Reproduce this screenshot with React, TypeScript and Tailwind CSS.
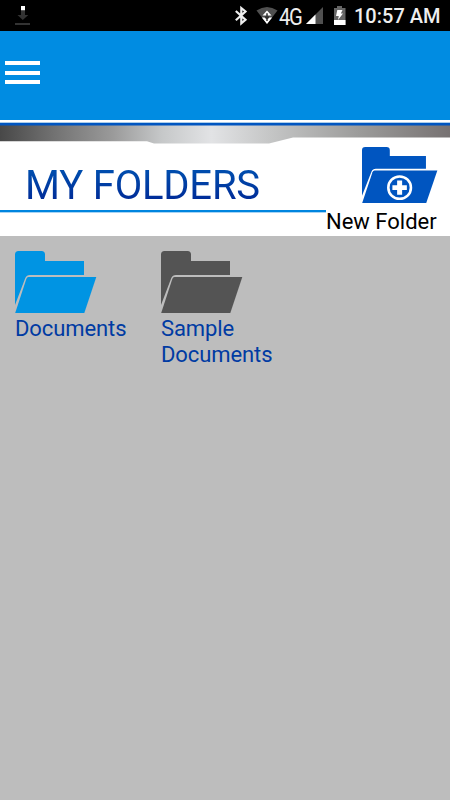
type FolderProps = { className: string; withPlus?: boolean };

function FolderIcon({ className, withPlus }: FolderProps) {
  return (
    <svg viewBox="0 0 82 62" preserveAspectRatio="none" className={className} fill="currentColor">
      <path d="M0 54V3.500Q0 0 3.500 0H26.500Q30 0 30 3.500V10H69V24H15Q11.500 24 10.300 27Z" />
      <path d="M13.500 26H81.300L69.300 62H0.200L11.300 28Q12 26 13.500 26Z" />
      {withPlus && (
        <g fill="none" stroke="white">
          <ellipse cx="40.600" cy="45" rx="12.200" ry="12.400" strokeWidth="2.800" />
          <path d="M40.600 37V53M32.800 45H48.400" strokeWidth="5.400" />
        </g>
      )}
    </svg>
  );
}

function StatusBar() {
  return (
    <div className="flex h-[31px] items-start justify-between bg-black pl-[15px] pr-[10px]">
      <svg className="mt-[5px] h-[21px] w-[15px]" viewBox="0 0 15 21">
        <path d="M6 5.500H10V10H13.300L7.800 15L2.500 10H6Z" fill="#333" />
        <path d="M6 1H10V5.300H6Z" fill="#fff" />
        <path d="M0 18H15V20H0Z" fill="#333" />
      </svg>
      <div className="flex">
        <svg className="h-[31px] w-[120px]" viewBox="232 0 120 31">
          <path d="M235.800 11L245.500 19.800L241.300 23.300V8L245.500 11.500L235.800 20.300" fill="none" stroke="#eee" strokeWidth="2.200" />
          <path d="M256.500 10.500Q267 3.500 277.500 10.500L267 24Z" fill="#505050" />
          <path d="M267 10.500L271.500 15.500H262.500ZM267 24L261.800 17.500H272.200Z" fill="#fff" />
          <path d="M267 13.200V21M265 16.500L267 19L269 16.500" fill="none" stroke="#333" strokeWidth="1.500" />
          <text transform="translate(279 24.500) scale(.88 1)" fill="#eee" fontFamily="Roboto, sans-serif" fontSize="23" textLength="27" lengthAdjust="spacing">4G</text>
          <path d="M323 7V24H306Z" fill="#505050" />
          <path d="M315.500 14.500V24H306Z" fill="#fff" />
          <path d="M334 8H337V6H342V8H345.500V25H334Z" fill="#666" />
          <path d="M334 20H345.500V25H334Z" fill="#fff" />
          <path d="M337.300 10H342.500L340.800 13.500H343L338 20L338.800 16H336Z" fill="#fff" />
        </svg>
        <span className="mt-[4px] w-[88px] whitespace-nowrap pl-[2px] text-[20px] font-medium leading-[25px] text-[#eee]">10:57 AM</span>
      </div>
    </div>
  );
}

export default function App() {
  return (
    <div className="flex h-[800px] w-[450px] flex-col overflow-hidden bg-[#bdbdbd] font-['Roboto',sans-serif]">
      <StatusBar />
      <header className="flex h-[89px] flex-col gap-[5.500px] bg-[#008ce2] pl-[5px] pt-[30px]">
        <i className="h-[4px] w-[35px] bg-white" />
        <i className="h-[4px] w-[35px] bg-white" />
        <i className="h-[4px] w-[35px] bg-white" />
      </header>
      <svg className="h-[25px] w-[450px] shrink-0" viewBox="0 120 450 25">
        <defs>
          <linearGradient id="metal" x1="0" x2="1">
            <stop offset="0" stopColor="#484848" />
            <stop offset=".12" stopColor="#727272" />
            <stop offset=".25" stopColor="#9a9a9a" />
            <stop offset=".36" stopColor="#c6c8c9" />
            <stop offset=".47" stopColor="#e2e3e5" />
            <stop offset=".6" stopColor="#c5c6c6" />
            <stop offset=".8" stopColor="#9b9b9a" />
            <stop offset="1" stopColor="#777272" />
          </linearGradient>
        </defs>
        <path d="M0 120H450V145H0Z" fill="#fff" />
        <path d="M0 122H450V123H0Z" fill="#aacdec" />
        <path d="M0 125H450V137.500H293L269 143.500H154L147 141.200H0Z" fill="url(#metal)" />
        <path d="M0 123H450V125.400H0Z" fill="#0055c0" />
      </svg>
      <section className="flex h-[91px] shrink-0 bg-white">
        <div className="w-[326px]">
          <h1 className="h-[65px] bg-linear-to-b from-[#0050b0] from-35% to-[#002b98] to-85% bg-clip-text pl-[25px] pt-[17px] text-[40px] leading-[48px] tracking-[-0.2px] whitespace-nowrap text-transparent">MY FOLDERS</h1>
          <div className="h-[3px] border-b border-[#a8d4f4] bg-[#0085df]" />
        </div>
        <div className="flex w-[124px] flex-col pt-[2px]">
          <FolderIcon className="ml-[36px] h-[56px] w-[76px] text-[#0055c0]" withPlus />
          <span className="mt-[6px] whitespace-nowrap text-[22px] leading-[26px] text-black">New Folder</span>
        </div>
      </section>
      <main className="flex pl-[15px] pt-[15px] text-[22px] leading-[26px] tracking-[-0.1px] text-[#003ba3]">
        <div className="w-[146px]">
          <FolderIcon className="h-[62px] w-[82px] text-[#0094e3]" />
          <p className="mt-[3px]">Documents</p>
        </div>
        <div className="w-[146px]">
          <FolderIcon className="h-[62px] w-[82px] text-[#545454]" />
          <p className="mt-[3px]">Sample Documents</p>
        </div>
      </main>
    </div>
  );
}
